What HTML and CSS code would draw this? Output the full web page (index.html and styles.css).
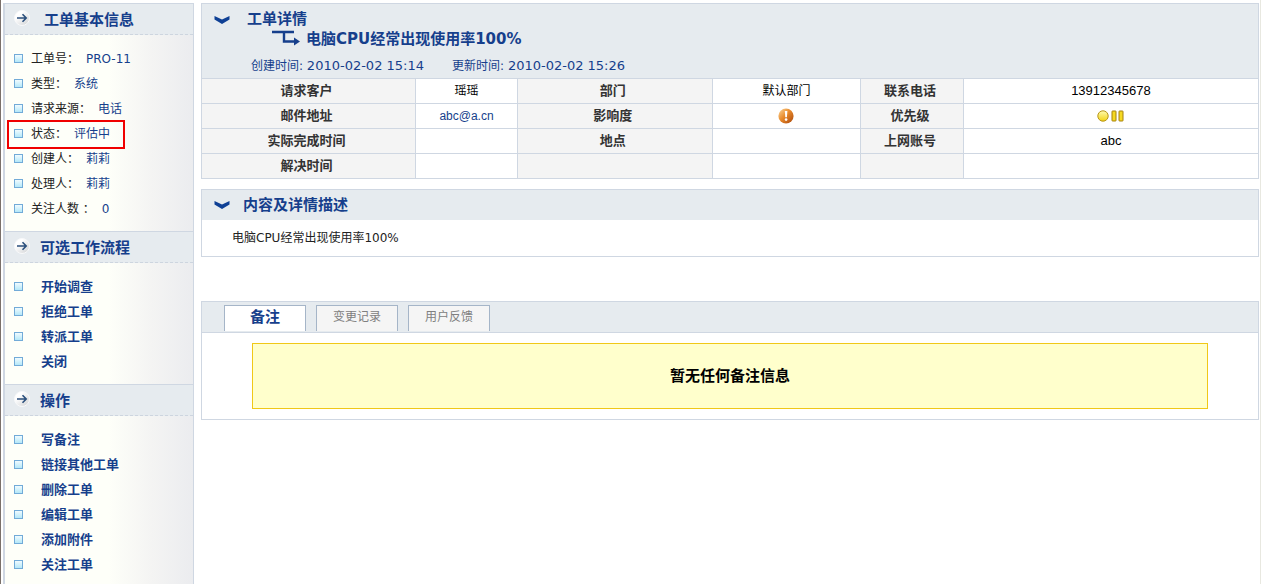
FILE: index.html
```html
<!DOCTYPE html>
<html lang="zh-CN">

<head>
  <meta charset="utf-8">
  <title>工单详情</title>
  <link rel="stylesheet" href="styles.css">
</head>

<body>
  <svg width="0" height="0" class="defs">
    <defs>
      <linearGradient id="circle-fill" x1="0" y1="0" x2="1" y2="1">
        <stop offset="0.3" stop-color="#ffffff" />
        <stop offset="1" stop-color="#cfd1d3" />
      </linearGradient>
      <linearGradient id="orange-fill" x1="0" y1="0" x2="1" y2="1">
        <stop offset="0" stop-color="#fbd9a0" />
        <stop offset="0.45" stop-color="#e98b2c" />
        <stop offset="1" stop-color="#a8450a" />
      </linearGradient>
      <linearGradient id="yellow-fill" x1="0" y1="0" x2="0" y2="1">
        <stop offset="0" stop-color="#fffbb0" />
        <stop offset="1" stop-color="#f3d312" />
      </linearGradient>
      <symbol id="arrow-circle" viewBox="0 0 16 16">
        <circle cx="8" cy="8" r="7.5" fill="url(#circle-fill)" stroke="#f8f9fa" />
        <path d="M3 8h9M8.5 4.3l3.7 3.7L8.5 11.7" fill="none" stroke="#2b4f7c" stroke-width="1.6" />
      </symbol>
      <symbol id="chevron" viewBox="0 0 16 8">
        <path d="M0.5 0L8 3.6L15.5 0V3.4L8 8L0.5 3.4z" fill="#0f4095" />
      </symbol>
    </defs>
  </svg>

  <div class="page">
    <aside class="sidebar">
      <section class="side-section">
        <h2 class="side-title info-title"><svg class="side-icon"><use href="#arrow-circle" /></svg>工单基本信息</h2>
        <ul class="side-list info-list">
          <li>工单号：<span class="value">PRO-11</span></li>
          <li>类型：<span class="value">系统</span></li>
          <li>请求来源：<span class="value">电话</span></li>
          <li class="marked">状态：<span class="value">评估中</span></li>
          <li>创建人：<span class="value">莉莉</span></li>
          <li>处理人：<span class="value">莉莉</span></li>
          <li>关注人数 ：<span class="value">0</span></li>
        </ul>
      </section>

      <section class="side-section">
        <h2 class="side-title"><svg class="side-icon"><use href="#arrow-circle" /></svg>可选工作流程</h2>
        <ul class="side-list action-list">
          <li><a href="#">开始调查</a></li>
          <li><a href="#">拒绝工单</a></li>
          <li><a href="#">转派工单</a></li>
          <li><a href="#">关闭</a></li>
        </ul>
      </section>

      <section class="side-section">
        <h2 class="side-title"><svg class="side-icon"><use href="#arrow-circle" /></svg>操作</h2>
        <ul class="side-list action-list">
          <li><a href="#">写备注</a></li>
          <li><a href="#">链接其他工单</a></li>
          <li><a href="#">删除工单</a></li>
          <li><a href="#">编辑工单</a></li>
          <li><a href="#">添加附件</a></li>
          <li><a href="#">关注工单</a></li>
        </ul>
      </section>
    </aside>

    <main class="main">
      <section class="panel">
        <div class="detail-header">
          <svg class="chevron"><use href="#chevron" /></svg>
          <div class="detail-text">
            <h1>工单详情</h1>
            <h2 class="subject">
              <svg class="branch" viewBox="0 0 28 16">
                <path d="M0 2h22M12 2v9.5h11" fill="none" stroke="#163f8c" stroke-width="2.4" />
                <path d="M22 7.5l6 4-6 4z" fill="#163f8c" />
              </svg>
              电脑CPU经常出现使用率100%
            </h2>
            <div class="meta">
              <span>创建时间: <time>2010-02-02 15:14</time></span>
              <span>更新时间: <time>2010-02-02 15:26</time></span>
            </div>
          </div>
        </div>
        <table class="detail-table">
          <colgroup>
            <col class="col-label-a">
            <col class="col-value-a">
            <col class="col-label-b">
            <col class="col-value-b">
            <col class="col-label-c">
            <col>
          </colgroup>
          <tr>
            <th>请求客户</th>
            <td>瑶瑶</td>
            <th>部门</th>
            <td>默认部门</td>
            <th>联系电话</th>
            <td class="latin">13912345678</td>
          </tr>
          <tr>
            <th>邮件地址</th>
            <td class="latin"><a href="mailto:abc@a.cn">abc@a.cn</a></td>
            <th>影响度</th>
            <td>
              <svg class="impact" viewBox="0 0 16 16">
                <circle cx="8" cy="8" r="7.6" fill="url(#orange-fill)" />
                <path d="M6.8 3h2.6l-.5 6.2H7.3z" fill="#fff" />
                <circle cx="8.1" cy="11.6" r="1.3" fill="#fff" />
              </svg>
            </td>
            <th>优先级</th>
            <td>
              <svg class="priority" viewBox="0 0 28 12">
                <circle cx="6" cy="6" r="5.2" fill="url(#yellow-fill)" stroke="#b8961a" />
                <rect x="15" y="1" width="4" height="10" rx="0.5" fill="#f5d922" stroke="#a5800c" />
                <rect x="22" y="1" width="4" height="10" rx="0.5" fill="#f5d922" stroke="#a5800c" />
              </svg>
            </td>
          </tr>
          <tr>
            <th>实际完成时间</th>
            <td></td>
            <th>地点</th>
            <td></td>
            <th>上网账号</th>
            <td class="latin">abc</td>
          </tr>
          <tr>
            <th>解决时间</th>
            <td></td>
            <th></th>
            <td></td>
            <th></th>
            <td></td>
          </tr>
        </table>
      </section>

      <section class="panel description">
        <div class="panel-header">
          <svg class="chevron"><use href="#chevron" /></svg>
          <h2>内容及详情描述</h2>
        </div>
        <p>电脑CPU经常出现使用率100%</p>
      </section>

      <section class="panel notes">
        <div class="tabs">
          <button type="button" class="tab active">备注</button>
          <button type="button" class="tab">变更记录</button>
          <button type="button" class="tab">用户反馈</button>
        </div>
        <div class="notes-body">
          <div class="empty-notice">暂无任何备注信息</div>
        </div>
      </section>
    </main>
  </div>
</body>

</html>
```

FILE: styles.css
```css
*,
*::before,
*::after {
  box-sizing: border-box;
}

body {
  margin: 0;
  font-family: "DejaVu Sans", "Noto Sans CJK SC", sans-serif;
  font-size: 12px;
  line-height: 24px;
  color: #222;
  background-color: #fff;
}

h1,
h2,
p,
ul {
  margin: 0;
  padding: 0;
}

h1,
h2 {
  font-size: 15px;
  color: #163f8c;
}

a {
  color: #163f8c;
  text-decoration: none;
}

svg {
  display: block;
  flex-shrink: 0;
}

.defs {
  position: absolute;
}

.page {
  display: flex;
  align-items: flex-start;
  gap: 7px;
  min-height: 100vh;
  padding: 3px 1px 0 2px;
  border-left: 1px solid #7a706a;
  border-right: 1px solid #e8e8e0;
}

/* Sidebar */
.sidebar {
  flex: 0 0 191px;
  border-left: 2px solid #cfd7e2;
  border-right: 1px solid #cfd7e2;
  background: linear-gradient(to right, #fefff9 55%, #f4f4f3 78%, #ebecef);
}

.side-title {
  display: flex;
  align-items: center;
  gap: 10px;
  height: 32px;
  padding: 2px 9px 0;
  border-top: 1px solid #cfd7e2;
  border-bottom: 1px dashed #cdd5df;
  background-color: #e6ebef;
}

.info-title {
  gap: 14px;
}

.side-icon {
  width: 16px;
  height: 16px;
  margin-bottom: 4px;
}

.side-list {
  padding: 11px 0 10px 9px;
  list-style: none;
}

.side-list li {
  display: flex;
  align-items: center;
  height: 25px;
}

.side-list li::before {
  content: "";
  width: 9px;
  height: 9px;
  margin-right: 8px;
  border: 1px solid #72abd8;
  background: linear-gradient(#f0fbff, #b5e8f8);
}

.action-list li::before {
  margin-right: 18px;
}

.action-list a {
  font-size: 13px;
  font-weight: bold;
}

.value {
  margin-left: 7px;
  color: #163f8c;
}

.marked {
  position: relative;
}

.marked::after {
  content: "";
  position: absolute;
  top: -1px;
  left: -7px;
  width: 118px;
  height: 29px;
  border: 2px solid #f00000;
}

/* Main column */
.main {
  flex: 1;
  min-width: 0;
}

.panel {
  border: 1px solid #cfd7e2;
}

.chevron {
  width: 16px;
  height: 8px;
}

.detail-header {
  display: flex;
  gap: 17px;
  padding: 4px 12px 0;
  background-color: #e6ebef;
}

.detail-header .chevron {
  margin-top: 8px;
}

.detail-header h1 {
  line-height: 22px;
}

.detail-header .subject {
  display: flex;
  gap: 6px;
  padding-left: 25px;
  line-height: 18px;
}

.branch {
  width: 28px;
  height: 16px;
}

.meta {
  display: flex;
  gap: 28px;
  padding: 8px 4px 2px;
  line-height: 20px;
  color: #163f8c;
}

.meta time {
  font-size: 13px;
}

.detail-table {
  width: 100%;
  table-layout: fixed;
  border-collapse: collapse;
}

.col-label-a {
  width: 20.2%;
}

.col-value-a,
.col-label-c {
  width: 9.7%;
}

.col-label-b {
  width: 18.4%;
}

.col-value-b {
  width: 14.1%;
}

.detail-table th,
.detail-table td {
  height: 25px;
  padding: 0;
  border: 1px solid #cfd7e2;
  line-height: 22px;
  text-align: center;
  vertical-align: middle;
  color: #000;
}

.detail-table th {
  padding-right: 4px;
  font-size: 13px;
  background-color: #f4f4f4;
  color: #333;
}

.detail-table tr > :first-child {
  border-left: 0;
}

.detail-table tr > :last-child {
  border-right: 0;
}

.detail-table tr:last-child > * {
  height: 24px;
  border-bottom: 0;
}

.detail-table .latin {
  font-family: "Liberation Sans", Arial, sans-serif;
  font-size: 13px;
}

.detail-table .latin a {
  font-size: 12px;
}

.impact {
  width: 16px;
  height: 16px;
  margin: 0 auto;
}

.priority {
  width: 28px;
  height: 12px;
  margin: 0 auto;
}

.description {
  margin-top: 10px;
}

.panel-header {
  display: flex;
  align-items: center;
  gap: 13px;
  height: 30px;
  padding: 0 12px;
  background-color: #e6ebef;
}

.description p {
  padding: 6px 30px;
}

.notes {
  margin-top: 44px;
}

.tabs {
  display: flex;
  gap: 10px;
  padding: 3px 22px 1px;
  border-bottom: 1px solid #cfd7e2;
  background-color: #e6ebef;
}

.tab {
  width: 82px;
  height: 26px;
  padding: 0 0 3px;
  border: 1px solid #a5b5c8;
  border-bottom: 0;
  background-color: #f5f5f5;
  font-family: inherit;
  font-size: 12px;
  line-height: 20px;
  color: #808080;
}

.tab.active {
  background-color: #fff;
  font-size: 15px;
  font-weight: bold;
  color: #163f8c;
}

.notes-body {
  padding: 10px 50px;
}

.empty-notice {
  padding: 20px;
  border: 1px solid #f0c818;
  background-color: #ffffcc;
  font-size: 15px;
  font-weight: bold;
  text-align: center;
  color: #000;
}
```
